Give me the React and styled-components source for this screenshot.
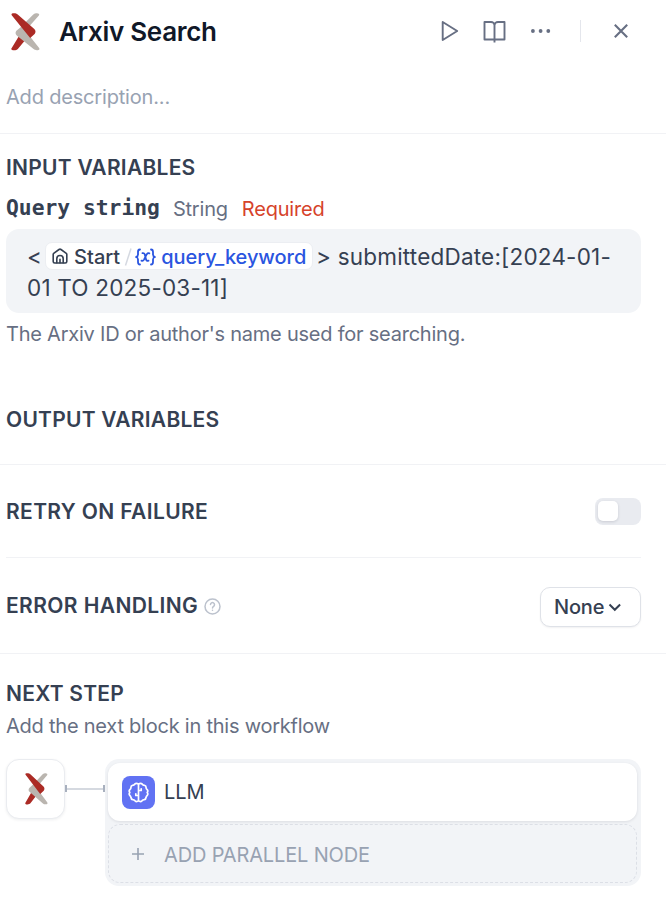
import React from "react";
import styled, { createGlobalStyle } from "styled-components";

const Global = createGlobalStyle`
  * { box-sizing: border-box; }
  body { margin: 0; background: #fff; }
`;

const Panel = styled.main`
  width: 666px;
  height: 908px;
  overflow: hidden;
  background: #fff;
  color: #354052;
  font-family: Inter, "Liberation Sans", sans-serif;
  font-size: 20px;
  line-height: 30px;
`;

const Header = styled.header`
  height: 134px;
  padding: 7px 6px 0;
  border-bottom: 1px solid #f1f2f5;
`;

const TitleRow = styled.div`
  display: flex;
  align-items: center;
  height: 50px;
  padding-left: 5px;
`;

const Title = styled.h1`
  flex: 1;
  margin: 0 0 0 19px;
  color: #101828;
  font-size: 26px;
  font-weight: 600;
  line-height: 50px;
  letter-spacing: -0.3px;
`;

const Actions = styled.div`
  display: flex;
  align-items: center;
  height: 48px;
  margin: -2px 20px 0 0;
  color: #676f83;
  svg { display: block; }
`;

const ActionButton = styled.button`
  display: flex;
  align-items: center;
  justify-content: center;
  width: ${(p) => p.$w || 46}px;
  height: 36px;
  padding: 0;
  border: 0;
  background: none;
  color: inherit;
`;

const Separator = styled.span`
  width: 1px;
  height: 22px;
  margin: 0 21px 0 16px;
  background: #e4e6ec;
`;

const Description = styled.p`
  margin: 25px 0 0;
  color: #98a2b2;
  letter-spacing: -0.18px;
`;

const Section = styled.section`
  height: ${(p) => p.$h}px;
  padding: ${(p) => p.$pt || 0}px 25px 0 6px;
  border-bottom: ${(p) => (p.$line ? "1px solid #f1f2f5" : "0")};
`;

const SettingRow = styled.section`
  display: flex;
  align-items: center;
  justify-content: space-between;
  height: ${(p) => p.$h}px;
  margin: 0 25px 0 6px;
  border-bottom: ${(p) => (p.$line ? "1px solid #f1f2f5" : "0")};
`;

const Heading = styled.h2`
  display: flex;
  align-items: center;
  gap: 6px;
  margin: 0;
  padding-top: ${(p) => p.$drop || 0}px;
  font-size: 21px;
  font-weight: 600;
  line-height: 30px;
  letter-spacing: ${(p) => p.$track || 0.25}px;
`;

const FieldLabel = styled.div`
  display: flex;
  align-items: center;
  height: 30px;
  margin-top: 11px;
`;

const FieldName = styled.span`
  margin: -2px 13px 0 0;
  font-family: "DejaVu Sans Mono", monospace;
  font-size: 21.3px;
  font-weight: 700;
`;

const FieldType = styled.span`
  margin-right: 14px;
  color: #676f83;
  letter-spacing: -0.2px;
`;

const RequiredMark = styled.span`
  color: #d6432b;
  letter-spacing: -0.2px;
`;

const QueryBox = styled.div`
  height: 84px;
  margin-top: 5px;
  padding: 12px 20px 0 21px;
  border-radius: 13px;
  background: #f2f4f7;
  font-size: 22.5px;
  line-height: 31px;
  letter-spacing: 0.2px;
`;

const QueryLine = styled.div`
  display: flex;
  align-items: center;
  height: 31px;
  white-space: pre;
`;

const VariableTag = styled.span`
  display: inline-flex;
  align-items: center;
  height: 28px;
  width: 268px;
  margin: -1px 3px 0 3px;
  padding: 1px 0 0 6px;
  border: 1px solid #eceef2;
  border-radius: 7px;
  background: #fff;
  font-size: 20px;
  font-weight: 500;
  letter-spacing: 0;
  svg { flex: none; }
`;

const NodeName = styled.span`
  margin: 1px 0 0 6px;
`;

const Slash = styled.svg`
  margin: 0 3px 0 4px;
`;

const VariableName = styled.span`
  margin: 1px 0 0 5px;
  color: #2a55e0;
  letter-spacing: -0.05px;
`;

const Hint = styled.p`
  margin: ${(p) => p.$mt || 0}px 0 0;
  color: #676f83;
  letter-spacing: -0.23px;
`;

const Switch = styled.span`
  display: flex;
  width: 46px;
  height: 27px;
  padding: 3px;
  border-radius: 8px;
  background: #e9ebf0;
`;

const Knob = styled.span`
  width: 20px;
  height: 20px;
  border-radius: 5px;
  background: #fff;
  box-shadow: 0 1px 3px rgba(16, 24, 40, 0.14);
`;

const Select = styled.button`
  display: flex;
  align-items: center;
  gap: 4px;
  width: 101px;
  height: 40px;
  margin-top: 3px;
  padding: 0 0 0 13px;
  border: 1px solid #dfe2e8;
  border-radius: 10px;
  background: #fff;
  color: #354052;
  font: 500 20px/30px Inter, sans-serif;
  letter-spacing: -0.2px;
  box-shadow: 0 1px 2px rgba(16, 24, 40, 0.06);
`;

const Flow = styled.div`
  display: flex;
  align-items: flex-start;
  margin-top: 18px;
`;

const SourceNode = styled.div`
  display: flex;
  align-items: center;
  justify-content: center;
  width: 59px;
  height: 60px;
  padding-left: 2px;
  border: 1px solid #eaecf0;
  border-radius: 13px;
  background: #fff;
  box-shadow: 0 1px 3px rgba(16, 24, 40, 0.07);
`;

const Connector = styled.div`
  display: flex;
  align-items: center;
  width: 40px;
  height: 59px;
`;

const Port = styled.span`
  width: 2px;
  height: 7px;
  background: #a8b0be;
`;

const Wire = styled.span`
  flex: 1;
  height: 2px;
  background: #d5d9e0;
`;

const Branches = styled.div`
  flex: 1;
  height: 127px;
  padding: 4px 4px 3px 3px;
  border-radius: 14px;
  background: #f2f4f7;
`;

const Branch = styled.div`
  display: flex;
  align-items: center;
  height: 58px;
  padding-left: 14px;
  border-radius: 12px;
  background: #fff;
  box-shadow: 0 1px 3px rgba(16, 24, 40, 0.1);
`;

const BranchName = styled.span`
  margin-left: 9px;
`;

const AddBranch = styled.div`
  display: flex;
  align-items: center;
  height: 59px;
  margin-top: 3px;
  padding: 2px 0 0 22px;
  border: 1px dashed #dcdfe6;
  border-radius: 12px;
  color: #98a2b2;
  letter-spacing: -0.15px;
  svg { margin: -2px 19px 0 0; }
`;

const BrainTile = styled.span`
  display: flex;
  align-items: center;
  justify-content: center;
  width: 33px;
  height: 33px;
  border-radius: 8px;
  background: #6172f3;
`;

const ArxivLogo = ({ width, height }) => (
  <svg width={width} height={height} viewBox="0 0 28 38" preserveAspectRatio="none">
    <path fill="#bab5af" d="M26 .6c1.300 .2 1.600 1.100.9 2L17.500 13.500 13.800 9.500 21.500 1.600C23 .2 24.500.2 26 .6Z" />
    <path fill="#ab2b25" d="M8 22.500 13.200 27.700 6.600 36C5.500 37.500 2.500 37.600 1 37 .1 36.500.1 35.800.7 35Z" />
    <path fill="#bab5af" d="M10.500 13.200 27 34.800c.8 1.100.6 1.900-.5 2.200-1.600.4-3.600.2-4.700-.9L5.800 22.700c-1.700-1.600-1.800-3.200-.6-5Z" />
    <path fill="#ab2b25" d="M.7 2.200C.2 1.200.5.500 1.800.3 3.400 0 5.200.2 6.500 1.500L22.500 16c1.500 1.500 1.500 3.400.3 5L18.500 25Z" />
  </svg>
);

const PlayIcon = () => (
  <svg width="22" height="22" viewBox="0 0 22 22" fill="none" stroke="currentColor" strokeWidth="1.900" strokeLinejoin="round">
    <path d="M3.700 2 18.200 11 3.700 20Z" />
  </svg>
);

const BookIcon = () => (
  <svg width="24" height="24" viewBox="0 0 24 24" fill="none" stroke="currentColor" strokeWidth="1.900" strokeLinejoin="round">
    <path d="M11.500 20.500H1.500V3H8C10 3 11.500 4.300 11.500 6.300V23.500M11.500 20.500H21.500V3H15C13 3 11.500 4.300 11.500 6.300" />
  </svg>
);

const MoreIcon = () => (
  <svg width="20" height="6" viewBox="0 0 20 6" fill="currentColor">
    <circle cx="1.900" cy="3" r="1.900" />
    <circle cx="9.600" cy="3" r="1.900" />
    <circle cx="17.300" cy="3" r="1.900" />
  </svg>
);

const CloseIcon = () => (
  <svg width="16" height="16" viewBox="0 0 16 16" fill="none" stroke="currentColor" strokeWidth="2.100">
    <path d="m1.800 1.800 12.400 12.400M14.200 1.800 1.800 14.200" />
  </svg>
);

const HomeIcon = () => (
  <svg width="16" height="17" viewBox="0 0 16 17" fill="none" stroke="currentColor" strokeWidth="1.600" strokeLinejoin="round" strokeLinecap="round">
    <path d="M1.200 6.300Q1.200 5.700 1.700 5.300L7 1.500Q8 .8 9 1.500L14.300 5.300Q14.800 5.700 14.800 6.300V13.500Q14.800 15 13.300 15H2.700Q1.200 15 1.200 13.500Z" />
    <path d="M4.800 14.800V10.700a3.200 3.200 0 0 1 6.400 0V14.800M8 11.200V14.800" />
  </svg>
);

const VariableIcon = () => (
  <svg width="21" height="18" viewBox="0 0 21 18" fill="none" stroke="#2a55e0" strokeWidth="1.800" strokeLinecap="round" strokeLinejoin="round">
    <path d="M5 1.500C3 1.500 3 2.500 3 4V6.500Q3 8.500 1 9 3 9.500 3 11.500V14C3 15.500 3 16.500 5 16.500M16 1.500C18 1.500 18 2.500 18 4V6.500Q18 8.500 20 9 18 9.500 18 11.500V14C18 15.500 18 16.500 16 16.500" />
    <path d="M7.500 5.200Q9.300 4.700 9.900 6.900L11 11.200Q11.500 13.300 13.500 12.600M14.300 5.300Q12.800 4.700 11.800 6.200L9 11.600Q8 13.300 6.500 12.600" />
  </svg>
);

const HelpIcon = () => (
  <svg width="17" height="17" viewBox="0 0 17 17" fill="none" stroke="#bcc2cd" strokeWidth="1.500" strokeLinecap="round">
    <circle cx="8.500" cy="8.500" r="7.500" />
    <path d="M6.500 6.600a2 2 0 1 1 3.100 1.700Q8.500 9 8.500 9.900M8.500 12.200V12.300" />
  </svg>
);

const ChevronIcon = () => (
  <svg width="14" height="9" viewBox="0 0 14 9" fill="none" stroke="currentColor" strokeWidth="2">
    <path d="m1.500 1.500 5.300 5.300 5.300-5.300" />
  </svg>
);

const BrainIcon = () => (
  <svg width="21" height="21" viewBox="0 0 21 21" fill="none" stroke="#fff" strokeWidth="1.700" strokeLinecap="round" strokeLinejoin="round">
    <path d="M10.500 2.100Q8.300.5 6.700 2.200 6.100 3.100 4.600 3.300 2.800 3.800 2.900 5.800 2.800 6.800 1.800 7.600.6 9 1.800 10.500.6 12 1.800 13.500 2.900 14.300 2.900 15.400 3 17.300 4.900 17.600 6.100 17.700 6.800 18.600 8.500 20.300 10.500 18.900 12.500 20.300 14.200 18.600 14.900 17.700 16.100 17.600 18 17.300 18.100 15.400 18.100 14.300 19.200 13.500 20.400 12 19.200 10.500 20.400 9 19.200 7.600 18.200 6.800 18.100 5.800 18.200 3.800 16.400 3.300 14.900 3.100 14.300 2.200 12.700.5 10.500 2.100Z" />
    <path d="M10.500 2.500V18.500M10.300 13.500H7.800V11.800M10.700 8.500H13.200V6.800" />
  </svg>
);

const PlusIcon = () => (
  <svg width="14" height="14" viewBox="0 0 14 14" stroke="currentColor" strokeWidth="1.600">
    <path d="M7 1V13M1 7H13" />
  </svg>
);

export default function App() {
  return (
    <Panel>
      <Global />
      <Header>
        <TitleRow>
          <ArxivLogo width={29} height={38} />
          <Title>Arxiv Search</Title>
          <Actions>
            <ActionButton $w={45}><PlayIcon /></ActionButton>
            <ActionButton><BookIcon /></ActionButton>
            <ActionButton><MoreIcon /></ActionButton>
            <Separator />
            <ActionButton $w={38}><CloseIcon /></ActionButton>
          </Actions>
        </TitleRow>
        <Description>Add description...</Description>
      </Header>

      <Section $h={270} $pt={19}>
        <Heading>INPUT VARIABLES</Heading>
        <FieldLabel>
          <FieldName>Query string</FieldName>
          <FieldType>String</FieldType>
          <RequiredMark>Required</RequiredMark>
        </FieldLabel>
        <QueryBox>
          <QueryLine>
            &lt;
            <VariableTag>
              <HomeIcon />
              <NodeName>Start</NodeName>
              <Slash width="8" height="18" viewBox="0 0 8 18">
                <path d="M7 .5 1.500 17.500" stroke="#d5d9e1" strokeWidth="1.500" />
              </Slash>
              <VariableIcon />
              <VariableName>query_keyword</VariableName>
            </VariableTag>
            {"> submittedDate:[2024-01-"}
          </QueryLine>
          <QueryLine>01 TO 2025-03-11]</QueryLine>
        </QueryBox>
        <Hint $mt={6}>The Arxiv ID or author's name used for searching.</Hint>
      </Section>

      <Section $h={61} $line>
        <Heading $drop={1}>OUTPUT VARIABLES</Heading>
      </Section>

      <SettingRow $h={93} $line>
        <Heading $drop={2} $track={0.36}>RETRY ON FAILURE</Heading>
        <Switch><Knob /></Switch>
      </SettingRow>
      <SettingRow $h={95}>
        <Heading $drop={1} $track={0.4}>ERROR HANDLING <HelpIcon /></Heading>
        <Select>None <ChevronIcon /></Select>
      </SettingRow>
      <Section $h={1} $line />

      <Section $h={254} $pt={25}>
        <Heading>NEXT STEP</Heading>
        <Hint $mt={2}>Add the next block in this workflow</Hint>
        <Flow>
          <SourceNode><ArxivLogo width={23} height={32} /></SourceNode>
          <Connector><Port /><Wire /><Port /></Connector>
          <Branches>
            <Branch>
              <BrainTile><BrainIcon /></BrainTile>
              <BranchName>LLM</BranchName>
            </Branch>
            <AddBranch><PlusIcon />ADD PARALLEL NODE</AddBranch>
          </Branches>
        </Flow>
      </Section>
    </Panel>
  );
}
